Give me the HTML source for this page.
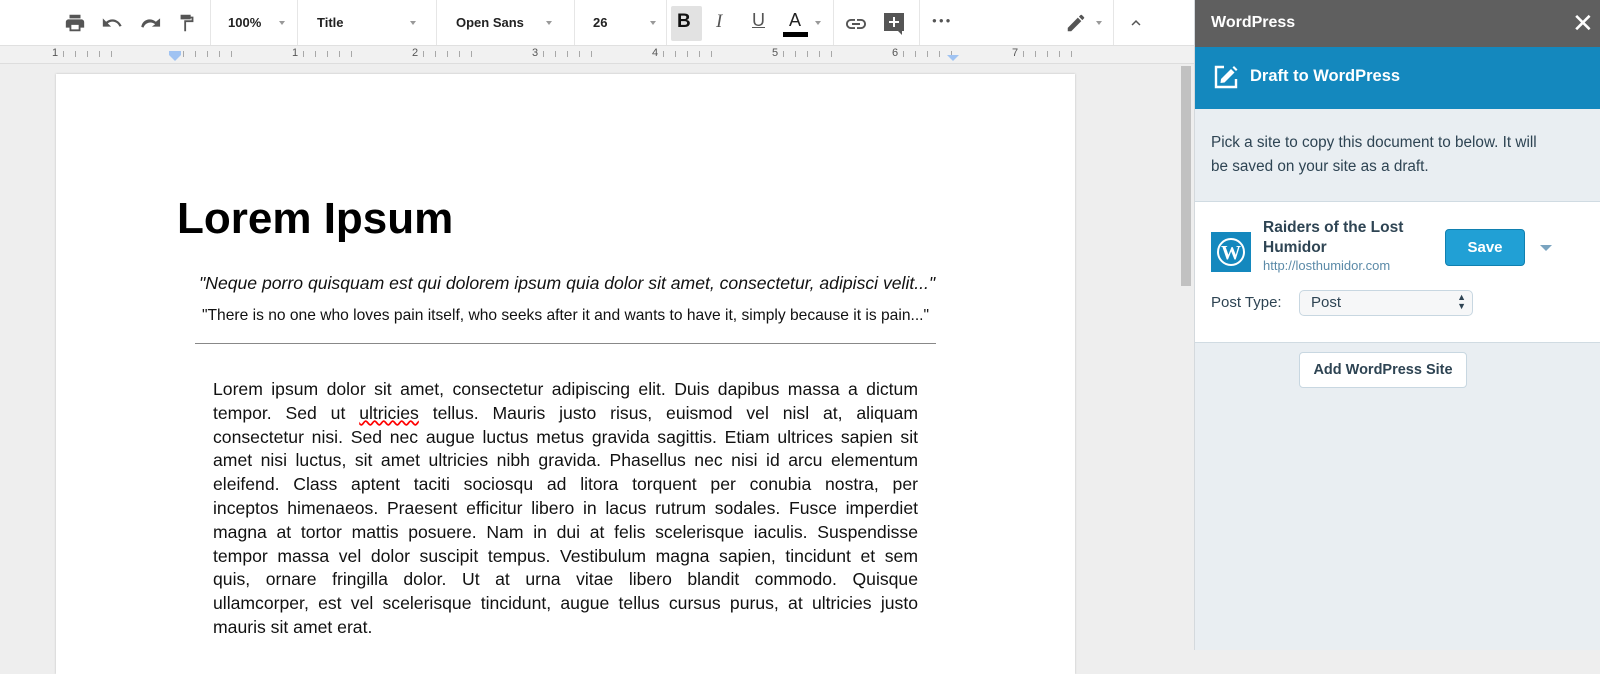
<!DOCTYPE html>
<html><head><meta charset="utf-8"><style>
*{margin:0;padding:0;box-sizing:border-box}
body{width:1600px;height:650px;overflow:hidden;background:#eeeeee;font-family:"Liberation Sans",sans-serif;position:relative}
.tb{position:absolute;left:0;top:0;width:1194px;height:46px;background:#fff;border-bottom:1px solid #e0e0e0}
.sep{position:absolute;top:0;width:1px;height:45px;background:#e6e6e6}
.t{position:absolute;top:15px;font-size:13px;font-weight:bold;color:#222}
.dd{position:absolute;top:21px;width:0;height:0;border-left:3.5px solid transparent;border-right:3.5px solid transparent;border-top:4px solid #999}
.ruler{position:absolute;left:0;top:46px;width:1194px;height:18px;background:#f1f1f1;border-bottom:1px solid #ddd;font-size:11px;color:#555}
.page{position:absolute;left:56px;top:74px;width:1019px;height:600px;background:#fff;box-shadow:0 0 2px #bbb}
.sb{position:absolute;left:1194px;top:0;width:406px;height:650px;background:#e9eef2;border-left:1px solid #d4d9dd}
.bt div{text-align:justify;text-align-last:justify;white-space:nowrap}
.bt div:last-child{text-align-last:left}
</style></head><body>
<div class="tb">
<svg style="position:absolute;left:64px;top:12px" width="22" height="22" viewBox="0 0 24 24"><path fill="#555" d="M19 8H5c-1.7 0-3 1.3-3 3v6h4v4h12v-4h4v-6c0-1.7-1.3-3-3-3zm-3 11H8v-5h8v5zM18 3H6v4h12z"/></svg>
<svg style="position:absolute;left:101px;top:12px" width="22" height="22" viewBox="0 0 24 24"><path fill="#555" d="M12.5 8c-2.6 0-5 1-6.9 2.600L2 7v9h9l-3.6-3.6c1.4-1.2 3.2-1.9 5.1-1.9 3.5 0 6.5 2.3 7.6 5.5l2.4-.8C21 11.5 17.1 8 12.5 8z"/></svg>
<svg style="position:absolute;left:139px;top:12px" width="22" height="22" viewBox="0 0 24 24"><path fill="#555" d="M18.4 10.6C16.5 9 14.1 8 11.5 8 6.9 8 3 11.5 2.5 16.2l2.4.8c1.1-3.2 4.1-5.5 7.6-5.5 1.9 0 3.7.7 5.1 1.9L14 16h9V7z"/></svg>
<svg style="position:absolute;left:176px;top:12px" width="22" height="22" viewBox="0 0 24 24"><path fill="#555" d="M5 3h11v5H5zM16 5h3v6h-8v10H9V9h8V7h-1z"/></svg>
<div class="sep" style="left:210px"></div>
<div class="t" style="left:228px">100%</div><div class="dd" style="left:279px"></div>
<div class="sep" style="left:297px"></div>
<div class="t" style="left:317px">Title</div><div class="dd" style="left:410px"></div>
<div class="sep" style="left:436px"></div>
<div class="t" style="left:456px">Open Sans</div><div class="dd" style="left:546px"></div>
<div class="sep" style="left:574px"></div>
<div class="t" style="left:593px">26</div><div class="dd" style="left:650px"></div>
<div class="sep" style="left:666px"></div>
<div style="position:absolute;left:671px;top:6px;width:31px;height:35px;background:#e2e2e2;border-radius:2px"></div>
<div style="position:absolute;left:677px;top:11px;font-size:19px;font-weight:bold;color:#111">B</div>
<div style="position:absolute;left:716px;top:11px;font-size:19px;font-style:italic;font-family:'Liberation Serif',serif;color:#555">I</div>
<div style="position:absolute;left:752px;top:10px;font-size:18px;color:#555;text-decoration:underline">U</div>
<div style="position:absolute;left:789px;top:10px;font-size:18px;color:#222">A</div>
<div style="position:absolute;left:783px;top:32px;width:25px;height:5px;background:#000"></div>
<div class="dd" style="left:815px"></div>
<div class="sep" style="left:833px"></div>
<svg style="position:absolute;left:844px;top:12px" width="24" height="24" viewBox="0 0 24 24"><path fill="#555" d="M3.9 12c0-1.7 1.4-3.1 3.1-3.1h4V7H7c-2.8 0-5 2.2-5 5s2.2 5 5 5h4v-1.9H7c-1.7 0-3.1-1.4-3.1-3.1zM8 13h8v-2H8zm9-6h-4v1.9h4c1.7 0 3.1 1.4 3.1 3.1s-1.4 3.1-3.1 3.1h-4V17h4c2.8 0 5-2.2 5-5s-2.2-5-5-5z"/></svg>
<svg style="position:absolute;left:882px;top:11px" width="24" height="26" viewBox="0 0 24 26"><path fill="#555" d="M2 2h20v18h-2v4l-4-4H2zM11 6v4H7v2h4v4h2v-4h4v-2h-4V6z" fill-rule="evenodd"/></svg>
<div class="sep" style="left:919px"></div>
<div style="position:absolute;left:932px;top:16px;font-size:8px;color:#555;letter-spacing:2px">●●●</div>
<svg style="position:absolute;left:1065px;top:12px" width="22" height="22" viewBox="0 0 24 24"><path fill="#555" d="M3 17.3V21h3.8L17.8 10 14 6.2zM20.7 7c.4-.4.4-1 0-1.4l-2.3-2.3c-.4-.4-1-.4-1.4 0l-1.8 1.8 3.7 3.7z"/></svg>
<div class="dd" style="left:1096px"></div>
<div class="sep" style="left:1113px"></div>
<svg style="position:absolute;left:1127px;top:14px" width="18" height="18" viewBox="0 0 24 24"><path fill="#555" d="M7.4 15.4L12 10.8l4.6 4.6L18 14l-6-6-6 6z"/></svg>
</div>
<div class="ruler">
<span style="position:absolute;left:52px;top:1px">1</span>
<span style="position:absolute;left:292px;top:1px">1</span>
<span style="position:absolute;left:412px;top:1px">2</span>
<span style="position:absolute;left:532px;top:1px">3</span>
<span style="position:absolute;left:652px;top:1px">4</span>
<span style="position:absolute;left:772px;top:1px">5</span>
<span style="position:absolute;left:892px;top:1px">6</span>
<span style="position:absolute;left:1012px;top:1px">7</span>
<div style="position:absolute;left:0;top:5px;width:1100px;height:6px;background:repeating-linear-gradient(90deg,transparent 0 63px,#888 63px 64px,transparent 64px 75px,#888 75px 76px,transparent 76px 87px,#888 87px 88px,transparent 88px 99px,#888 99px 100px,transparent 100px 111px,#888 111px 112px,transparent 112px 123px);background-size:120px 6px;opacity:.7"></div>
<div style="position:absolute;left:169px;top:5px;width:12px;height:4px;background:#a0c3f2"></div>
<div style="position:absolute;left:169px;top:9px;border-left:6px solid transparent;border-right:6px solid transparent;border-top:6px solid #a0c3f2"></div>
<div style="position:absolute;left:947px;top:9px;border-left:6px solid transparent;border-right:6px solid transparent;border-top:6px solid #a0c3f2"></div>
</div>
<div style="position:absolute;left:1181px;top:66px;width:10px;height:220px;background:#c1c1c1"></div>
<div class="page">
<div style="position:absolute;left:121px;top:120px;font-size:44px;font-weight:bold;color:#000">Lorem Ipsum</div>
<div style="position:absolute;left:143px;top:199px;font-size:17.6px;font-style:italic;color:#111;white-space:nowrap">"Neque porro quisquam est qui dolorem ipsum quia dolor sit amet, consectetur, adipisci velit..."</div>
<div style="position:absolute;left:146px;top:233px;font-size:15.6px;color:#111;white-space:nowrap">"There is no one who loves pain itself, who seeks after it and wants to have it, simply because it is pain..."</div>
<div style="position:absolute;left:139px;top:269px;width:741px;height:1px;background:#888"></div>
<div class="bt" style="position:absolute;left:157px;top:304px;width:705px;font-size:17.6px;line-height:23.8px;color:#111">
<div>Lorem ipsum dolor sit amet, consectetur adipiscing elit. Duis dapibus massa a dictum</div>
<div>tempor. Sed ut <span style="text-decoration:underline wavy red">ultricies</span> tellus. Mauris justo risus, euismod vel nisl at, aliquam</div>
<div>consectetur nisi. Sed nec augue luctus metus gravida sagittis. Etiam ultrices sapien sit</div>
<div>amet nisi luctus, sit amet ultricies nibh gravida. Phasellus nec nisi id arcu elementum</div>
<div>eleifend. Class aptent taciti sociosqu ad litora torquent per conubia nostra, per</div>
<div>inceptos himenaeos. Praesent efficitur libero in lacus rutrum sodales. Fusce imperdiet</div>
<div>magna at tortor mattis posuere. Nam in dui at felis scelerisque iaculis. Suspendisse</div>
<div>tempor massa vel dolor suscipit tempus. Vestibulum magna sapien, tincidunt et sem</div>
<div>quis, ornare fringilla dolor. Ut at urna vitae libero blandit commodo. Quisque</div>
<div>ullamcorper, est vel scelerisque tincidunt, augue tellus cursus purus, at ultricies justo</div>
<div>mauris sit amet erat.</div>
</div>
</div>
<div class="sb">
<div style="position:absolute;left:0;top:0;width:406px;height:47px;background:#5f5f5f"></div>
<div style="position:absolute;left:16px;top:14px;font-size:16px;font-weight:bold;color:#fff">WordPress</div>
<div style="position:absolute;left:377px;top:8px;font-size:26px;color:#fff;line-height:30px">✕</div>
<div style="position:absolute;left:0;top:47px;width:406px;height:62px;background:#1488be"></div>
<svg style="position:absolute;left:18px;top:64px" width="26" height="26" viewBox="0 0 26 26"><path fill="none" stroke="#fff" stroke-width="2.4" d="M11 3H3v20h20v-8"/><path fill="#fff" d="M8 15l-0.5 4 4-0.5 10-10-3.5-3.5zM19.5 3.5l3.5 3.5 1.5-1.5-3.5-3.5z"/></svg>
<div style="position:absolute;left:55px;top:67px;font-size:16.5px;font-weight:bold;color:#fff">Draft to WordPress</div>
<div style="position:absolute;left:16px;top:131px;width:345px;font-size:15.3px;line-height:24px;color:#2e4453">Pick a site to copy this document to below. It will be saved on your site as a draft.</div>
<div style="position:absolute;left:0;top:201px;width:406px;height:142px;background:#fff;border-top:1px solid #d0dbe2;border-bottom:1px solid #d0dbe2"></div>
<div style="position:absolute;left:16px;top:232px;width:40px;height:40px;background:#1488be"></div>
<svg style="position:absolute;left:21px;top:237px" width="30" height="30" viewBox="0 0 30 30"><circle cx="15" cy="15" r="13" fill="none" stroke="#fff" stroke-width="2"/><text x="15" y="22" text-anchor="middle" font-family="Liberation Serif,serif" font-weight="bold" font-size="20" fill="#fff">W</text></svg>
<div style="position:absolute;left:68px;top:218px;font-size:15.5px;font-weight:bold;color:#2e4453;line-height:20px">Raiders of the Lost<br>Humidor</div>
<div style="position:absolute;left:68px;top:258px;font-size:13px;color:#5b8aa8">http://losthumidor.com</div>
<div style="position:absolute;left:250px;top:229px;width:80px;height:37px;background:#21a0d5;border:1px solid #1080b0;border-radius:4px;color:#fff;font-weight:bold;font-size:15px;text-align:center;line-height:35px">Save</div>
<div style="position:absolute;left:345px;top:245px;border-left:6px solid transparent;border-right:6px solid transparent;border-top:6px solid #7aa4c0"></div>
<div style="position:absolute;left:16px;top:294px;font-size:15px;color:#2e4453">Post Type:</div>
<div style="position:absolute;left:104px;top:290px;width:174px;height:26px;background:#f6f7f8;border:1px solid #c8d7e1;border-radius:5px;font-size:15px;color:#2e4453;padding:3px 0 0 11px">Post<span style="position:absolute;right:6px;top:2px;font-size:9px;line-height:9px">▲<br>▼</span></div>
<div style="position:absolute;left:104px;top:352px;width:168px;height:36px;background:#fff;border:1px solid #c8d7e1;border-radius:4px;font-size:14.5px;font-weight:bold;color:#2e4453;text-align:center;line-height:34px">Add WordPress Site</div>
</div>
</body></html>
